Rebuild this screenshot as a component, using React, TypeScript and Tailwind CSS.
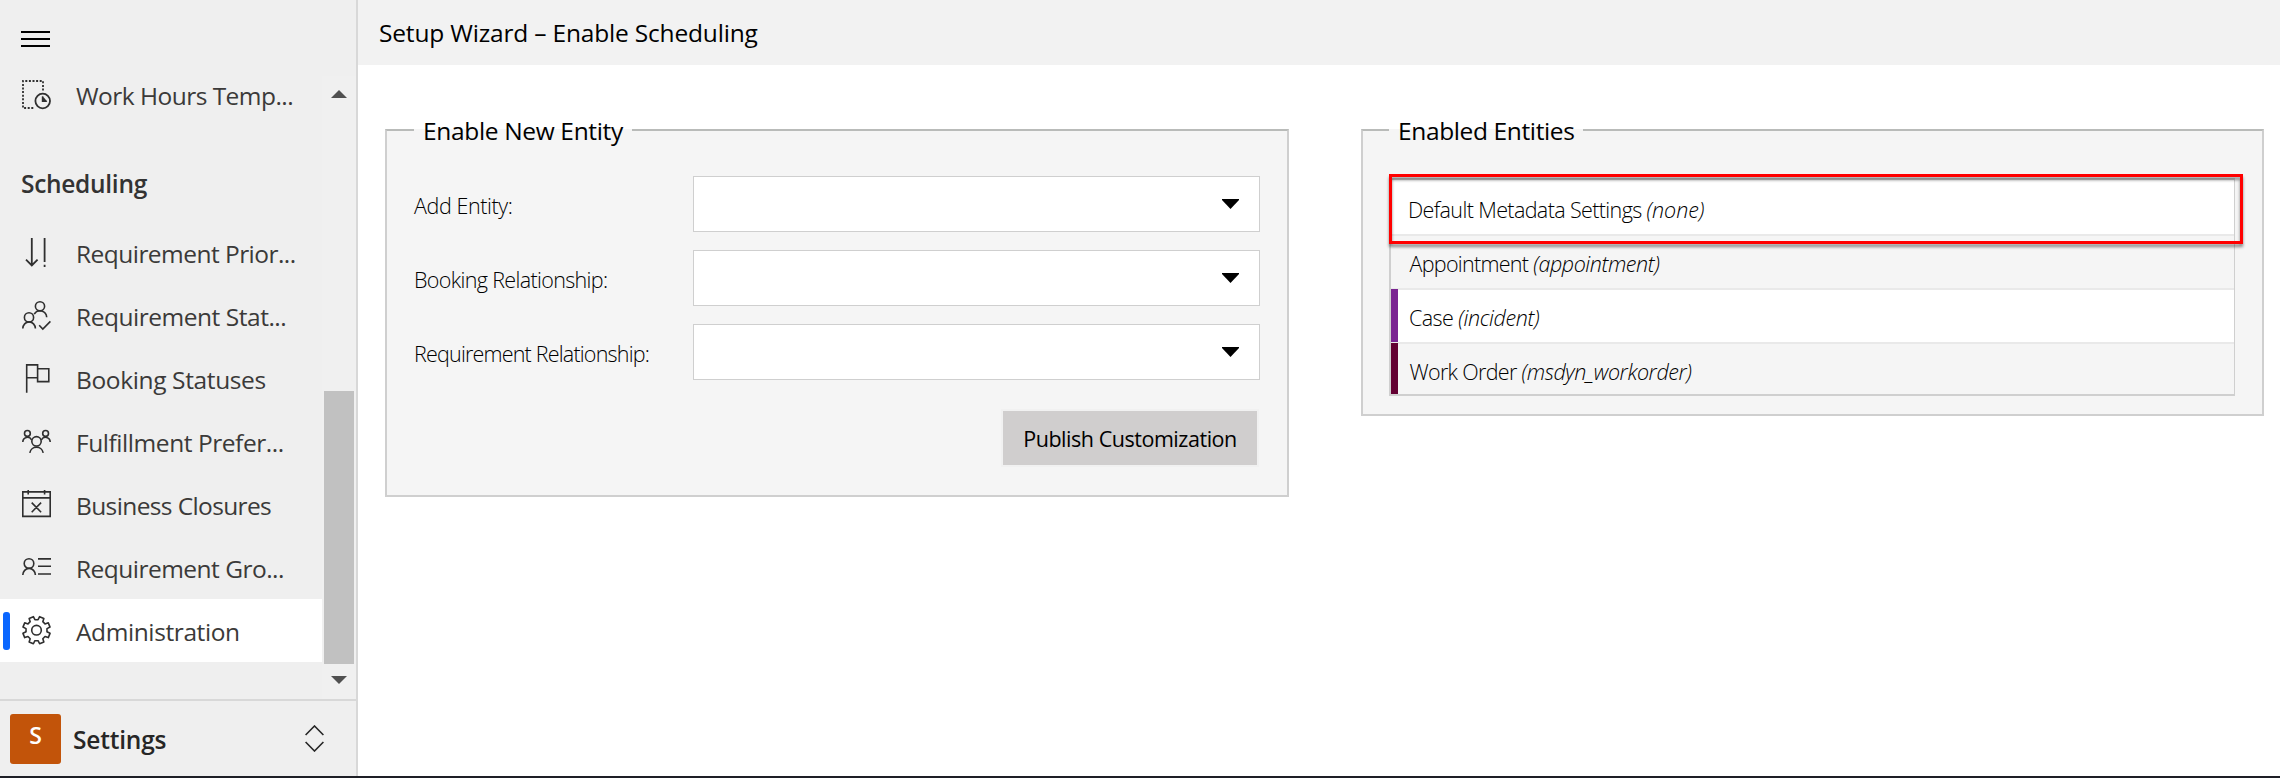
import type { ReactNode } from "react";

function Icon({ children, width = 1.6 }: { children: ReactNode; width?: number }) {
  return (
    <svg
      className="ml-3 h-[29px] w-[29px] shrink-0 overflow-visible text-[#2f2f2f]"
      viewBox="0 0 29 29"
      fill="none"
      stroke="currentColor"
      strokeWidth={width}
    >
      {children}
    </svg>
  );
}

function gearPath(): string {
  const points: string[] = [];
  for (let i = 0; i < 8; i++) {
    const center = 22.5 + i * 45;
    const corners: [number, number][] = [
      [-14, 10.6],
      [-9.5, 13.9],
      [9.5, 13.9],
      [14, 10.6],
    ];
    for (const [offset, radius] of corners) {
      const a = ((center + offset) * Math.PI) / 180;
      points.push(`${(14.5 + radius * Math.cos(a)).toFixed(2)} ${(14.2 + radius * Math.sin(a)).toFixed(2)}`);
    }
  }
  return `M${points.join("L")}Z`;
}

const templateIcon = (
  <Icon width={1.8}>
    <path d="M21 10.5V1H1v27h11" strokeDasharray="2 1.6" />
    <circle cx="20.7" cy="21" r="7.3" />
    <path d="M20.7 16.5v4.6h4M21.2 18.2l2.2 2.6h-2.2z" />
  </Icon>
);
const priorityIcon = (
  <Icon>
    <path d="M9.8 0v27.5M4 21.6l5.8 5.8 5.8-5.8M22.6 0v24M22.6 26.8v2.2" strokeWidth="1.8" />
  </Icon>
);
const peopleCheckIcon = (
  <Icon>
    <circle cx="18" cy="5.3" r="4.6" />
    <path d="M12.2 13.2A6.7 6.7 0 0 1 24.7 16.2" />
    <circle cx="7" cy="16.4" r="4.6" />
    <path d="M.8 27.6a6.3 6.7 0 0 1 12.6 0M17.2 24.2l3.6 3.8 7.6-7.6" />
  </Icon>
);
const flagIcon = (
  <Icon>
    <path d="M4.7 28.8V.9h10.9v12.8H4.7M15.6 4.8h11.2v12.8H15.6z" />
  </Icon>
);
const groupIcon = (
  <Icon>
    <circle cx="5.4" cy="6.4" r="2.9" />
    <circle cx="23.6" cy="6.4" r="2.9" />
    <circle cx="14.5" cy="14.3" r="4.7" />
    <path d="M.8 15a4.7 4.9 0 0 1 8.8-2.2M28.2 15a4.7 4.9 0 0 0-8.8-2.2M7.8 25.8a6.8 6.8 0 0 1 13.4 0" />
  </Icon>
);
const calendarIcon = (
  <Icon>
    <path d="M.8 1.9h27.4v24.5H.8zM.8 7.9h27.4M6.2 0v4.6M22.6 0v4.6M9.7 12.6l9.4 9.6M19.1 12.6l-9.4 9.6" />
  </Icon>
);
const personListIcon = (
  <Icon>
    <circle cx="7" cy="10.5" r="4.8" />
    <path d="M.8 22.1a6.3 6.7 0 0 1 12.6 0M16 5.9h13M16 13.3h13M16 21h13" />
  </Icon>
);
const gearIcon = (
  <Icon>
    <path d={gearPath()} strokeLinejoin="round" />
    <circle cx="14.5" cy="14.2" r="4.8" />
  </Icon>
);

function NavItem({ icon, label, tracking, active = false }: { icon: ReactNode; label: string; tracking: string; active?: boolean }) {
  return (
    <a className={`flex h-[63px] w-[322px] items-center ${active ? "bg-white" : ""}`}>
      <span className={`ml-[3px] h-[38px] w-[7px] rounded-[3px] ${active ? "bg-[#0a66ff]" : ""}`} />
      {icon}
      <span className={`ml-[25px] whitespace-nowrap pt-0.5 text-[24.5px] leading-[34px] text-[#3b3a39] ${tracking}`}>{label}</span>
    </a>
  );
}

function Field({ label, tracking }: { label: string; tracking: string }) {
  return (
    <div className="flex h-14 items-center">
      <label className={`w-[279px] whitespace-nowrap pt-1 text-[21.5px] font-light leading-[30px] ${tracking}`}>{label}</label>
      <button className="flex h-14 w-[567px] items-center justify-end border border-[#cfcfcf] bg-white pr-5">
        <svg className="h-2.5 w-[17px]" viewBox="0 0 17 10">
          <path d="M0 0H17V1L8.5 10L0 1Z" fill="#000" />
        </svg>
      </button>
    </div>
  );
}

const fieldset = "border-2 border-[#cfcfcf] border-t-[#b9bbb9] bg-[#f5f5f5]";
const legend = "pl-[9px] pt-0.5 whitespace-nowrap text-[24.5px] leading-[32px]";

export default function App() {
  return (
    <div className="flex h-[778px] w-[2280px] flex-col overflow-hidden bg-white font-['Open_Sans','Noto_Sans',sans-serif] text-black">
      <div className="flex h-[776px]">
        <aside className="flex w-[358px] shrink-0 flex-col border-r-2 border-[#d8d8d8] bg-[#efefef]">
          <div className="flex h-[63px] shrink-0 flex-col gap-[5px] pl-[21px] pt-[31px]">
            <span className="h-0.5 w-[29px] bg-black" />
            <span className="h-0.5 w-[29px] bg-black" />
            <span className="h-0.5 w-[29px] bg-black" />
          </div>
          <div className="flex h-[636px] shrink-0">
            <nav className="w-[322px]">
              <NavItem icon={templateIcon} label="Work Hours Temp..." tracking="tracking-[-0.53px]" />
              <h2 className="h-[95px] pl-[21px] pt-[41px] text-[24.5px] font-semibold leading-[34px] tracking-[-0.3px] text-[#333]">
                Scheduling
              </h2>
              <NavItem icon={priorityIcon} label="Requirement Prior..." tracking="tracking-[-0.54px]" />
              <NavItem icon={peopleCheckIcon} label="Requirement Stat..." tracking="tracking-[-0.47px]" />
              <NavItem icon={flagIcon} label="Booking Statuses" tracking="tracking-[-0.37px]" />
              <NavItem icon={groupIcon} label="Fulfillment Prefer..." tracking="tracking-[-0.44px]" />
              <NavItem icon={calendarIcon} label="Business Closures" tracking="tracking-[-0.62px]" />
              <NavItem icon={personListIcon} label="Requirement Gro..." tracking="tracking-[-0.52px]" />
              <NavItem icon={gearIcon} label="Administration" tracking="tracking-[-0.4px]" active />
            </nav>
            <div className="mt-[13px] flex w-[34px] flex-col bg-[#f0f0f0] pl-0.5">
              <svg className="ml-[7px] mt-[14px] h-2 w-4" viewBox="0 0 16 8">
                <path d="M0 8L8 0L16 8Z" fill="#505050" />
              </svg>
              <div className="mt-[293px] h-[273px] w-[30px] bg-[#c1c1c1]" />
              <svg className="ml-[7px] mt-3 h-2 w-4" viewBox="0 0 16 8">
                <path d="M0 0L8 8L16 0Z" fill="#505050" />
              </svg>
            </div>
          </div>
          <div className="flex flex-1 items-center border-t-2 border-[#d8d8d8]">
            <div className="ml-2.5 flex h-[50px] w-[51px] items-center justify-center rounded-[3px] bg-[#c2540a] pb-[7px] text-[23px] font-semibold leading-[32px] text-white">
              S
            </div>
            <span className="ml-3 w-[232px] pt-0.5 text-[24.5px] font-semibold leading-[34px] tracking-[-0.2px] text-[#262626]">
              Settings
            </span>
            <svg className="h-[27px] w-[19px]" viewBox="0 0 19 27" fill="none" stroke="#262626" strokeWidth="1.6">
              <path d="M.6 10L9.5 1L18.4 10M.6 17L9.5 26L18.4 17" />
            </svg>
          </div>
        </aside>
        <main className="flex-1">
          <header className="h-[65px] bg-[#f2f2f2] pl-[21px] pt-4 text-[24.5px] leading-[34px] tracking-[-0.18px]">
            Setup Wizard – Enable Scheduling
          </header>
          <div className="flex items-start gap-[72px] pl-[27px] pt-12">
            <fieldset className={`h-[384px] w-[904px] px-[27px] ${fieldset}`}>
              <legend className={`w-[218px] tracking-[-0.34px] ${legend}`}>Enable New Entity</legend>
              <div className="flex flex-col gap-[18px] pt-[29px]">
                <Field label="Add Entity:" tracking="tracking-[-0.4px]" />
                <Field label="Booking Relationship:" tracking="tracking-[-0.65px]" />
                <Field label="Requirement Relationship:" tracking="tracking-[-0.8px]" />
              </div>
              <div className="mt-[29px] flex justify-end pr-px">
                <button className="h-[58px] w-[258px] whitespace-nowrap border-2 border-[#f1f1f1] bg-[#d0cece] pt-0.5 text-[21.5px] leading-[30px] tracking-[-0.46px]">
                  Publish Customization
                </button>
              </div>
            </fieldset>
            <fieldset className={`h-[303px] w-[903px] px-[26px] ${fieldset}`}>
              <legend className={`w-[194px] tracking-[-0.37px] ${legend}`}>Enabled Entities</legend>
              <div className="relative mt-[31px] h-[218px] w-[846px] border-2 border-r border-[#cfcfcf] text-[21.5px] font-light leading-[30px] whitespace-pre">
                <div className="h-14 border-b-2 border-[#e9e9e9] bg-white pl-[17px] pt-[15px]">
                  <span className="tracking-[-0.62px]">Default Metadata Settings </span>
                  <i className="tracking-[-0.1px]">(none)</i>
                </div>
                <div className="h-[54px] border-b-2 border-[#e9e9e9] pl-[18.5px] pt-[13px]">
                  <span className="tracking-[-0.7px]">Appointment </span>
                  <i className="tracking-[-0.42px]">(appointment)</i>
                </div>
                <div className="relative h-[54px] border-b-2 border-[#e9e9e9] bg-white pl-[18px] pt-[13px]">
                  <span className="absolute -top-px left-0 h-[53px] w-[7px] bg-[#7a2491]" />
                  <span className="tracking-[-0.6px]">Case </span>
                  <i className="tracking-[-0.35px]">(incident)</i>
                </div>
                <div className="relative h-[50px] pl-[18.5px] pt-[13px]">
                  <span className="absolute -top-px left-0 h-[51px] w-[7px] bg-[#630032]" />
                  <span className="tracking-[-0.68px]">Work Order </span>
                  <i className="tracking-[-0.4px]">(msdyn_workorder)</i>
                </div>
                <div className="pointer-events-none absolute -left-0.5 -top-1.5 h-[70px] w-[854px] border-[3px] border-[#ff0000] drop-shadow-[0_3px_1.5px_rgba(0,0,0,0.45)]" />
              </div>
            </fieldset>
          </div>
        </main>
      </div>
      <div className="h-0.5 bg-[#1e1f26]" />
    </div>
  );
}
